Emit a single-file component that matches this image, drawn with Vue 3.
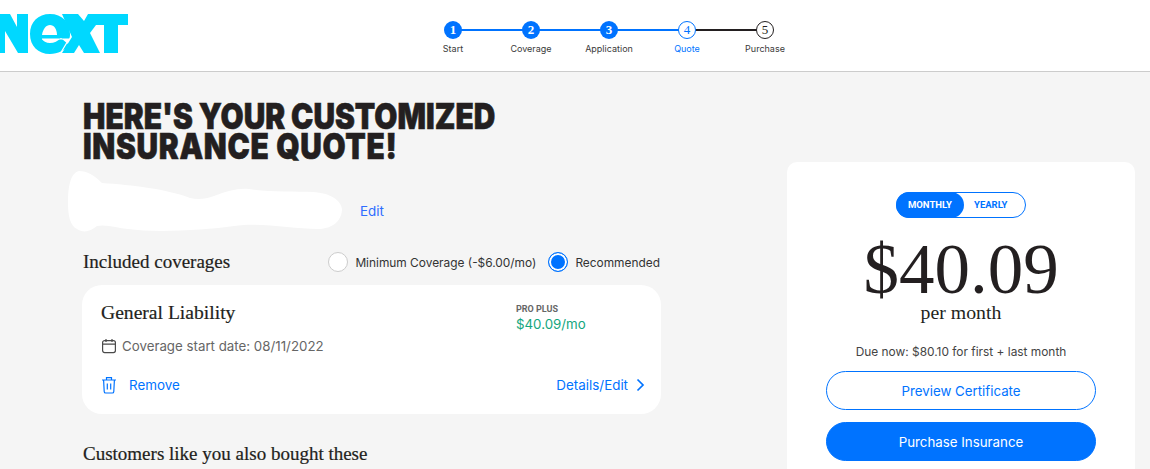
<template>
  <div class="page">
    <header class="topbar">
      <svg class="logo" width="130" height="54" viewBox="0 0 130 54">
        <path fill="#00d8ff" d="M-6 14H10L17 27V14H28V53H18L5 31V53H-6z" />
        <path fill="#00d8ff" fill-rule="evenodd" d="M50 14c12 0 20 8 20 20 0 2 0 3-1 5H42c1 2 4 4 8 4 4 0 8-2 11-5l8 7c-4 5-11 9-19 9-12 0-20-8-20-20s8-20 20-20zm0 11c-4 0-7 4-8 10h15c0-6-3-10-7-10z" />
        <path stroke="#fff" stroke-width="1.2" fill="none" d="M42 39h27l-9 15" />
        <path fill="#00d8ff" d="M62 14H78L84 21 88 14H128V25H118V53H104V25H96L90 33 100 53H84L79 45 74 53H62L72 37z" />
      </svg>
      <ol class="steps">
        <li v-for="(step, i) in steps" :key="step.label" class="step" :class="step.state">
          <span v-if="i < steps.length - 1" class="line" :class="{ dark: step.state === 'current' }"></span>
          <span class="dot">{{ i + 1 }}</span>
          <span class="label">{{ step.label }}</span>
        </li>
      </ol>
    </header>

    <main class="content">
      <section class="left">
        <h1>Here's your customized<br /><span class="wide">insurance quote!</span></h1>
        <div class="name-row">
          <svg class="scribble" width="276" height="62" viewBox="0 0 276 62">
            <path fill="#fff" d="M11 1c8 0 15 4 23 12 30 2 65 6 88 15 8 2 16 1 24-2 13-5 24-8 35-7 20 3 45 2 64 3 17 1 28 8 29 17 0 11-9 20-24 20-26 0-56-7-84-3-29 4-78 7-106 3-10-1-22-5-31-3-7 6-14 7-20 3-7-3-9-14-9-26C0 18 2 3 11 1z" />
          </svg>
          <a class="edit">Edit</a>
        </div>

        <div class="coverage-head">
          <h2>Included coverages</h2>
          <div class="options">
            <label class="radio"><span class="circle"></span>Minimum Coverage (-$6.00/mo)</label>
            <label class="radio"><span class="circle on"></span>Recommended</label>
          </div>
        </div>

        <div class="card">
          <div class="card-top">
            <div>
              <h3>General Liability</h3>
              <p class="start">
                <svg width="16" height="16" viewBox="0 0 16 16" fill="none" stroke="#4a4a4a" stroke-width="1.2">
                  <rect x="1.6" y="2.6" width="12.8" height="12" rx="2" />
                  <path d="M1.6 6.2h12.8M5 1v3M11 1v3" />
                </svg>
                Coverage start date: 08/11/2022
              </p>
            </div>
            <div class="plan">
              <span class="plan-name">PRO PLUS</span>
              <span class="plan-price">$40.09/mo</span>
            </div>
          </div>
          <div class="card-bottom">
            <a class="link remove">
              <svg width="16" height="18" viewBox="0 0 16 18" fill="none" stroke="#0073ff" stroke-width="1.2">
                <path d="M1 4h14M5.5 4V1.6h5V4M2.6 4l.6 11.4c0 1 .7 1.6 1.6 1.6h6.4c.9 0 1.6-.6 1.6-1.6L13.4 4M6.3 7.5v6M9.7 7.5v6" />
              </svg>
              Remove
            </a>
            <a class="link details">
              Details/Edit
              <svg width="9" height="14" viewBox="0 0 9 14" fill="none" stroke="#0073ff" stroke-width="1.7">
                <path d="M1.5 1.5 7 7l-5.5 5.5" />
              </svg>
            </a>
          </div>
        </div>

        <h2 class="also">Customers like you also bought these</h2>
      </section>

      <aside class="summary">
        <div class="toggle">
          <span class="opt active">MONTHLY</span>
          <span class="opt">YEARLY</span>
        </div>
        <div class="price">$40.09</div>
        <div class="per">per month</div>
        <p class="due">Due now: $80.10 for first + last month</p>
        <button class="btn outline">Preview Certificate</button>
        <button class="btn solid">Purchase Insurance</button>
      </aside>
    </main>
  </div>
</template>

<script setup>
const steps = [
  { label: 'Start', state: 'done' },
  { label: 'Coverage', state: 'done' },
  { label: 'Application', state: 'done' },
  { label: 'Quote', state: 'current' },
  { label: 'Purchase', state: 'todo' }
]
</script>

<style>
html, body {
  margin: 0;
  overflow: hidden;
  background: #f5f5f5;
}
</style>

<style scoped>
.page {
  height: 469px;
  overflow: hidden;
  background: #f5f5f5;
  font-family: Inter, "Liberation Sans", sans-serif;
  color: #231f20;
}

.topbar {
  height: 71px;
  background: #fff;
  border-bottom: 1px solid #ccc;
  display: flex;
}

.logo {
  display: block;
  flex: none;
}

.steps {
  list-style: none;
  margin: 21px 0 0 284px;
  padding: 0;
  display: flex;
}

.step {
  width: 78px;
  display: flex;
  flex-direction: column;
  align-items: center;
  position: relative;
}

.dot {
  width: 18px;
  height: 18px;
  box-sizing: border-box;
  border-radius: 50%;
  display: flex;
  align-items: center;
  justify-content: center;
  font: bold 13px "Liberation Serif", serif;
  position: relative;
}

.done .dot {
  background: #0073ff;
  color: #fff;
}

.current .dot {
  background: #fff;
  border: 1px solid #0073ff;
  color: #0073ff;
  font-weight: normal;
}

.todo .dot {
  background: #fff;
  border: 1px solid #231f20;
  font-weight: normal;
}

.line {
  position: absolute;
  left: 39px;
  top: 8px;
  width: 78px;
  height: 2px;
  background: #0073ff;
}

.line.dark {
  background: #231f20;
}

.label {
  margin-top: 4px;
  font-size: 9px;
  line-height: 12px;
  white-space: nowrap;
  color: #3a3a3a;
}

.current .label {
  color: #0073ff;
}

.content {
  display: flex;
  align-items: flex-start;
}

.left {
  width: 579px;
  margin-left: 82px;
}

h1 {
  margin: 29px 0 0 1px;
  font-size: 35px;
  line-height: 30px;
  font-weight: 900;
  text-transform: uppercase;
  white-space: nowrap;
  transform: scaleX(0.853);
  transform-origin: left top;
  -webkit-text-stroke: 0.6px #231f20;
}

.wide {
  letter-spacing: 0.8px;
}

.name-row {
  display: flex;
  align-items: flex-end;
  height: 62px;
  margin: 9px 0 0 -14px;
}

.scribble {
  display: block;
}

.edit {
  font-size: 13.4px;
  line-height: 18px;
  color: #2f6dff;
  margin: 0 0 12px 16px;
}

.coverage-head {
  display: flex;
  justify-content: space-between;
  align-items: center;
  margin-top: 17px;
  height: 26px;
  padding-left: 1px;
}

h2 {
  margin: 0;
  font: 19px/26px "Liberation Serif", serif;
  -webkit-text-stroke: 0.2px #231f20;
}

.options {
  display: flex;
  gap: 12px;
  margin-right: 1px;
}

.radio {
  display: flex;
  align-items: center;
  gap: 7px;
  font-size: 11.9px;
  color: #333;
}

.circle {
  width: 20px;
  height: 20px;
  box-sizing: border-box;
  border-radius: 50%;
  background: #fff;
  border: 1px solid #ccc;
}

.circle.on {
  background: #0073ff;
  border: 1px solid #0073ff;
  box-shadow: inset 0 0 0 2px #fff;
}

.card {
  margin-top: 10px;
  height: 129px;
  box-sizing: border-box;
  padding: 15px 19px 0 19px;
  background: #fff;
  border-radius: 20px;
}

.card-top {
  display: flex;
  justify-content: space-between;
  height: 70px;
}

h3 {
  margin: 0;
  font: 19.6px/26px "Liberation Serif", serif;
  -webkit-text-stroke: 0.2px #231f20;
}

.start {
  display: flex;
  align-items: center;
  gap: 5px;
  margin: 11px 0 0;
  font-size: 13.3px;
  line-height: 18px;
  color: #666;
}

.plan {
  display: flex;
  flex-direction: column;
  width: 126px;
  padding-top: 3px;
}

.plan-name {
  font: bold 9px/12px Roboto, sans-serif;
  color: #666;
}

.plan-price {
  font-size: 13.3px;
  line-height: 18px;
  color: #13a67e;
}

.card-bottom {
  display: flex;
  justify-content: space-between;
  margin-top: 6px;
}

.link {
  display: flex;
  align-items: center;
  gap: 8px;
  font-size: 13.4px;
  line-height: 18px;
  color: #0073ff;
}

.remove {
  gap: 12px;
}

.details {
  margin-right: -3px;
}

.also {
  margin-top: 27px;
  padding-left: 1px;
}

.summary {
  margin: 90px 0 0 126px;
  width: 348px;
  height: 400px;
  background: #fff;
  border-radius: 10px;
  display: flex;
  flex-direction: column;
  align-items: center;
  padding-top: 30px;
  box-sizing: border-box;
}

.toggle {
  width: 130px;
  height: 26px;
  box-sizing: border-box;
  border: 1px solid #0073ff;
  border-radius: 13px;
  display: flex;
  font: bold 9.5px/24px Roboto, sans-serif;
  color: #0073ff;
}

.opt {
  padding: 0 10px;
}

.opt.active {
  width: 68px;
  box-sizing: border-box;
  margin: -1px 0 -1px -1px;
  height: 26px;
  line-height: 26px;
  padding-left: 12px;
  background: #0073ff;
  color: #fff;
  border-radius: 13px;
}

.price {
  margin-top: 19px;
  font: 71px/64px "Liberation Serif", serif;
}

.per {
  font: 19.8px/22px "Liberation Serif", serif;
}

.due {
  margin: 21px 0 -1px;
  font-size: 11.9px;
  line-height: 16px;
  color: #444;
}

.btn {
  width: 270px;
  height: 39px;
  box-sizing: border-box;
  border-radius: 20px;
  font-family: inherit;
  font-size: 13.3px;
  margin-top: 12px;
  border: 1px solid #0073ff;
}

.btn.outline {
  background: #fff;
  color: #0073ff;
}

.btn.solid {
  background: #0073ff;
  color: #fff;
}
</style>
